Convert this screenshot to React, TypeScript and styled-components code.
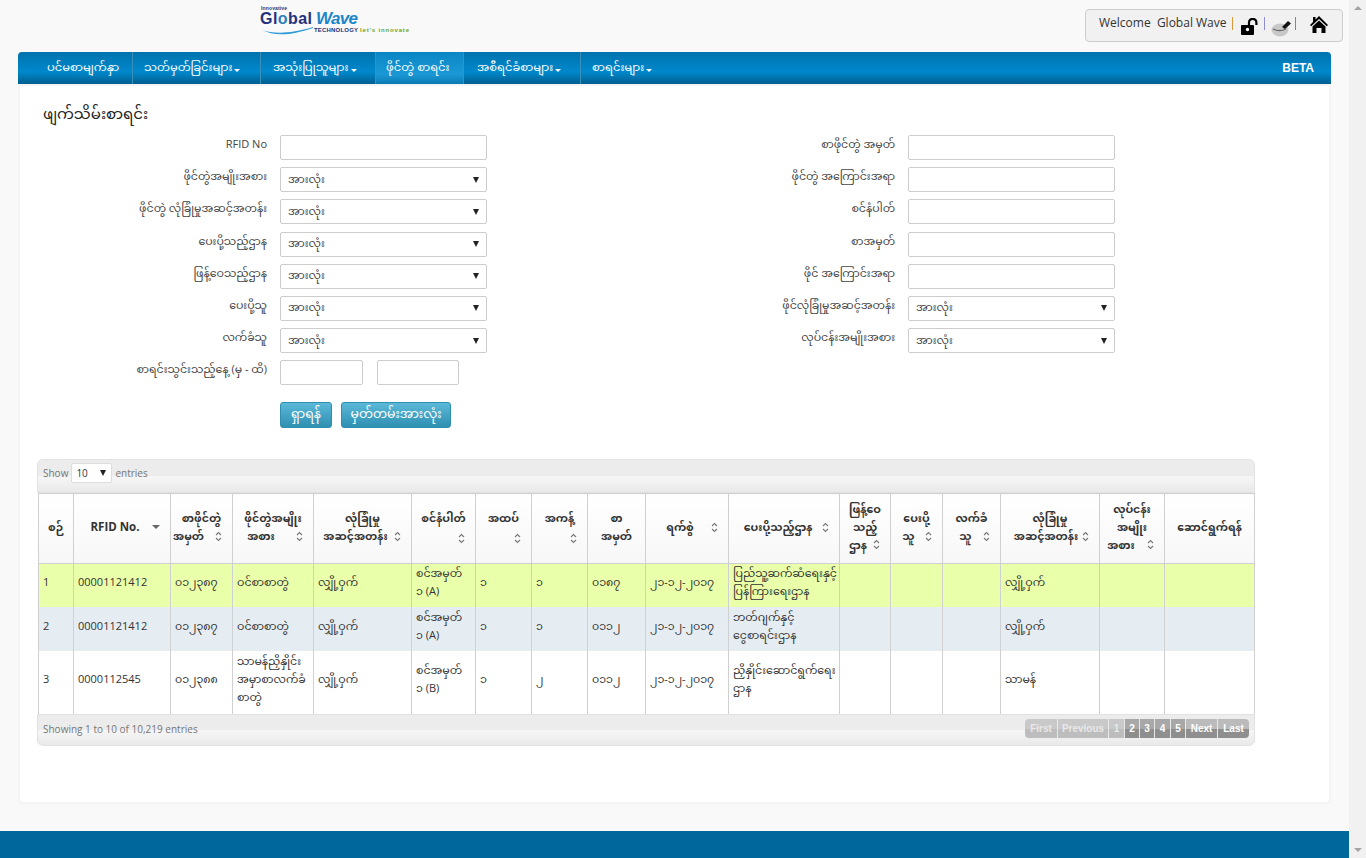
import styled, { createGlobalStyle } from "styled-components";

const GlobalStyle = createGlobalStyle`
  body {
    margin: 0;
    padding-right: 17px;
    background: #f9f9f9;
    font-family: "Open Sans", "Noto Sans Myanmar", "Padauk", "Myanmar Text", "Noto Sans", sans-serif;
    font-size: 12px;
    color: #333;
  }
  * { box-sizing: border-box; }
`;

const navItems = [
  { label: "ပင်မစာမျက်နှာ", width: 115, pad: 29 },
  { label: "သတ်မှတ်ခြင်းများ", width: 128, pad: 11, caret: true },
  { label: "အသုံးပြုသူများ", width: 115, pad: 12, caret: true },
  { label: "ဖိုင်တွဲ စာရင်း", width: 88, pad: 10, active: true },
  { label: "အစီရင်ခံစာများ", width: 117, pad: 13, caret: true },
  { label: "စာရင်းများ", width: 85, pad: 11, caret: true },
];

const leftFields = [
  { label: "RFID No" },
  { label: "ဖိုင်တွဲအမျိုးအစား", select: true },
  { label: "ဖိုင်တွဲ လုံခြုံမှုအဆင့်အတန်း", select: true },
  { label: "ပေးပို့သည့်ဌာန", select: true },
  { label: "ဖြန့်ဝေသည့်ဌာန", select: true },
  { label: "ပေးပို့သူ", select: true },
  { label: "လက်ခံသူ", select: true },
];

const rightFields = [
  { label: "စာဖိုင်တွဲ အမှတ်" },
  { label: "ဖိုင်တွဲ အကြောင်းအရာ" },
  { label: "စင်နံပါတ်" },
  { label: "စာအမှတ်" },
  { label: "ဖိုင် အကြောင်းအရာ" },
  { label: "ဖိုင်လုံခြုံမှုအဆင့်အတန်း", select: true },
  { label: "လုပ်ငန်းအမျိုးအစား", select: true },
];

// top = where the sort icon sits, shift = how far the last line is pushed left
const columns = [
  { lines: ["စဉ်"], width: 35 },
  { lines: ["RFID No."], width: 97, caret: 29, big: true, shift: 7 },
  { lines: ["စာဖိုင်တွဲ", "အမှတ်"], width: 62, top: 42, shift: 13 },
  { lines: ["ဖိုင်တွဲအမျိုး", "အစား"], width: 81, top: 42, shift: 12 },
  { lines: ["လုံခြုံမှု", "အဆင့်အတန်း"], width: 98, top: 42, shift: 7 },
  { lines: ["စင်နံပါတ်", "\u00a0"], width: 64, top: 44 },
  { lines: ["အထပ်", "\u00a0"], width: 56, top: 44 },
  { lines: ["အကန့်", "\u00a0"], width: 56, top: 44 },
  { lines: ["စာ", "အမှတ်"], width: 58 },
  { lines: ["ရက်စွဲ"], width: 83, top: 33, shift: 7 },
  { lines: ["ပေးပို့သည့်ဌာန"], width: 111, top: 33, shift: 6 },
  { lines: ["ဖြန့်ဝေ", "သည့်", "ဌာန"], width: 51, top: 50, shift: 7 },
  { lines: ["ပေးပို့", "သူ"], width: 52, top: 42, shift: 8 },
  { lines: ["လက်ခံ", "သူ"], width: 58, top: 42, shift: 6 },
  { lines: ["လုံခြုံမှု", "အဆင့်အတန်း"], width: 99, top: 42, shift: 4 },
  { lines: ["လုပ်ငန်း", "အမျိုး", "အစား"], width: 65, top: 50, shift: 11 },
  { lines: ["ဆောင်ရွက်ရန်"], width: 90 },
];

const rows = [
  ["1", "00001121412", "၀၁၂၃၈၇", "ဝင်စာစာတွဲ", "လျှို့ဝှက်", "စင်အမှတ်\n၁ (A)", "၁", "၁", "၀၁၈၇", "၂၁-၁၂-၂၀၁၇", "ပြည်သူ့ဆက်ဆံရေးနှင့်ပြန်ကြားရေးဌာန", "", "", "", "လျှို့ဝှက်", "", ""],
  ["2", "00001121412", "၀၁၂၃၈၇", "ဝင်စာစာတွဲ", "လျှို့ဝှက်", "စင်အမှတ်\n၁ (A)", "၁", "၁", "၀၁၁၂", "၂၁-၁၂-၂၀၁၇", "ဘတ်ဂျက်နှင့် ငွေစာရင်းဌာန", "", "", "", "လျှို့ဝှက်", "", ""],
  ["3", "0000112545", "၀၁၂၃၈၈", "သာမန်ညှိနှိုင်း အမှာစာလက်ခံ စာတွဲ", "လျှို့ဝှက်", "စင်အမှတ်\n၁ (B)", "၁", "၂", "၀၁၁၂", "၂၁-၁၂-၂၀၁၇", "ညှိနှိုင်းဆောင်ရွက်ရေး ဌာန", "", "", "", "သာမန်", "", ""],
];

const pages = [
  { label: "First", off: true, width: 33 },
  { label: "Previous", off: true, width: 51 },
  { label: "1", off: true, width: 16 },
  { label: "2", width: 15 },
  { label: "3", width: 15 },
  { label: "4", width: 16 },
  { label: "5", width: 15 },
  { label: "Next", width: 32, light: true },
  { label: "Last", width: 31, light: true },
];

const Scrollbar = styled.aside`
  position: fixed;
  top: 0;
  right: 0;
  bottom: 0;
  width: 17px;
  display: flex;
  flex-direction: column;
  justify-content: space-between;
  align-items: center;
  padding: 6px 0;
  background: #f1f1f1;
`;
const ScrollArrow = styled.i<{ $down?: boolean }>`
  border-left: 4px solid transparent;
  border-right: 4px solid transparent;
  ${(p) => (p.$down ? "border-top: 4px solid #a3a3a3;" : "border-bottom: 4px solid #a3a3a3;")}
`;
const Header = styled.header`
  height: 52px;
  display: flex;
  justify-content: space-between;
  align-items: flex-start;
  padding: 5px 6px 0 260px;
`;
const Logo = styled.svg`
  display: block;
`;
const WelcomeBox = styled.div`
  width: 258px;
  height: 33px;
  margin-top: 4px;
  padding: 0 0 0 13px;
  display: flex;
  background: #f1f1f1;
  border: 1px solid #ccc;
  border-radius: 4px;
  font-size: 12px;
  color: #333;
`;
const WelcomeText = styled.span`
  line-height: 25px;
  white-space: pre;
`;
const Pipe = styled.i<{ $color: string; $left: number }>`
  width: 1px;
  height: 13px;
  margin: 7px 0 0 ${(p) => p.$left}px;
  background: ${(p) => p.$color};
`;
const IconSlot = styled.span<{ $left: number; $top: number }>`
  margin: ${(p) => p.$top}px 0 0 ${(p) => p.$left}px;
  line-height: 0;
`;
const Nav = styled.nav`
  margin: 0 18px;
  height: 32px;
  display: flex;
  justify-content: space-between;
  border-radius: 4px 4px 0 0;
  background: linear-gradient(#0073ae 0%, #0088cc 62%, #005f8f 100%);
`;
const NavList = styled.div`
  display: flex;
`;
const NavItem = styled.div<{ $width: number; $pad: number; $active?: boolean }>`
  width: ${(p) => p.$width}px;
  padding-left: ${(p) => p.$pad}px;
  display: flex;
  align-items: center;
  gap: 2px;
  color: #fff;
  font-size: 11.5px;
  white-space: nowrap;
  border-right: 1px solid #3c8fb8;
  background: ${(p) => (p.$active ? "linear-gradient(#0a86c4, #1b98d6 70%, #0a7ab2)" : "none")};
  &:last-child { border-right: 0; }
`;
const Caret = styled.i`
  margin-top: 4px;
  border-left: 3px solid transparent;
  border-right: 3px solid transparent;
  border-top: 3px solid #fff;
`;
const Beta = styled.b`
  align-self: center;
  margin-right: 17px;
  color: #fff;
  font-family: "Liberation Sans", sans-serif;
  font-size: 12px;
`;
const Panel = styled.main`
  margin: 0 18px;
  height: 720px;
  padding: 16px 17px 0;
  background: #fff;
  border: 2px solid #f4f4f4;
  border-radius: 0 0 4px 4px;
`;
const Title = styled.h1`
  margin: 0 0 11px 6px;
  height: 22px;
  font-size: 15px;
  font-weight: 400;
  line-height: 22px;
  color: #222;
`;
const FormGrid = styled.div`
  display: grid;
  grid-template-columns: 628px 1fr;
`;
const FormColumn = styled.div`
  display: flex;
  flex-direction: column;
  gap: 7.2px;
`;
const FormRow = styled.label`
  display: flex;
  align-items: flex-start;
  gap: 13px;
  height: 25px;
`;
const FieldLabel = styled.span`
  width: 230px;
  flex: none;
  text-align: right;
  font-size: 11px;
  line-height: 18px;
  white-space: nowrap;
  color: #444;
`;
const TextBox = styled.div<{ $width?: number }>`
  width: ${(p) => p.$width ?? 207}px;
  height: 25px;
  background: #fff;
  border: 1px solid #ccc;
  border-radius: 2px;
`;
const SelectBox = styled(TextBox)`
  display: flex;
  align-items: center;
  justify-content: space-between;
  padding: 0 7px;
  font-size: 11px;
  color: #444;
`;
const SelectArrow = styled.i`
  border-left: 3px solid transparent;
  border-right: 3px solid transparent;
  border-top: 6px solid #222;
`;
const DateGap = styled.div`
  display: flex;
  gap: 14px;
`;
const Buttons = styled.div`
  display: flex;
  gap: 9px;
  margin: 17px 0 31px 243px;
`;
const Button = styled.div<{ $width: number }>`
  width: ${(p) => p.$width}px;
  height: 26px;
  display: flex;
  align-items: center;
  justify-content: center;
  color: #fff;
  font-size: 12.5px;
  border-radius: 3px;
  border: 1px solid #2f8fae;
  background: linear-gradient(#5bb8d8, #2f90b2);
`;
const TableWrap = styled.section`
  width: 1218px;
`;
const Bar = styled.div<{ $bottom?: boolean }>`
  height: ${(p) => (p.$bottom ? 32 : 34)}px;
  display: flex;
  align-items: center;
  justify-content: space-between;
  padding: ${(p) => (p.$bottom ? "0 5px 3px 5px" : "0 5px 7px")};
  color: #777;
  font-size: 10px;
  border: 1px solid #e2e2e2;
  border-radius: ${(p) => (p.$bottom ? "0 0 6px 6px" : "6px 6px 0 0")};
  background: linear-gradient(#ececec 50%, #f6f6f6 51%, #e9e9e9);
`;
const ShowEntries = styled.div`
  display: flex;
  align-items: center;
  gap: 3px;
`;
const SmallSelect = styled.div`
  width: 41px;
  height: 20px;
  display: flex;
  align-items: center;
  justify-content: space-between;
  padding: 0 5px 0 4px;
  color: #333;
  background: #fff;
  border: 1px solid #ddd;
  border-radius: 2px;
`;
const Table = styled.table`
  width: 1216px;
  margin-left: 1px;
  table-layout: fixed;
  border-collapse: collapse;
  font-size: 11px;
`;
const Col = styled.col<{ $width: number }>`
  width: ${(p) => p.$width}px;
`;
const HeadCell = styled.th<{ $big?: boolean }>`
  position: relative;
  height: 70px;
  padding: 0 0 4px;
  text-align: center;
  vertical-align: middle;
  font-size: ${(p) => (p.$big ? 11.5 : 11)}px;
  line-height: 18px;
  color: #333;
  border: 1px solid #d0d0d0;
  background: linear-gradient(#ffffff, #f7f7f7);
`;
const HeadLine = styled.span<{ $shift: number }>`
  display: block;
  padding-right: ${(p) => p.$shift * 2}px;
  white-space: nowrap;
`;
const BodyRow = styled.tr<{ $bg: string; $height: number }>`
  height: ${(p) => p.$height}px;
  background: ${(p) => p.$bg};
`;
const BodyCell = styled.td`
  padding: 0 2px 7px 4px;
  line-height: 18px;
  white-space: pre-line;
  color: #333;
  border: solid #d0d0d0;
  border-width: 0 1px;
`;
const SortMark = styled.svg<{ $top: number }>`
  position: absolute;
  top: ${(p) => p.$top - 5}px;
  right: 10px;
`;
const CaretDown = styled.i<{ $top: number }>`
  position: absolute;
  top: ${(p) => p.$top}px;
  right: 10px;
  border-left: 4px solid transparent;
  border-right: 4px solid transparent;
  border-top: 4px solid #666;
`;
const Pager = styled.div`
  display: flex;
  border-radius: 4px;
  overflow: hidden;
`;
const PageButton = styled.span<{ $width: number; $off?: boolean; $light?: boolean }>`
  width: ${(p) => p.$width}px;
  height: 19px;
  display: flex;
  align-items: center;
  justify-content: center;
  font-family: "Liberation Sans", sans-serif;
  font-size: 10px;
  font-weight: 700;
  color: ${(p) => (p.$off ? "#e8e8e8" : "#fff")};
  border-right: 1px solid #e8e8e8;
  background: ${(p) =>
    p.$off
      ? "linear-gradient(#c9c9c9 50%, #bdbdbd 51%)"
      : p.$light
        ? "linear-gradient(#bbb 50%, #8f8f8f 51%)"
        : "linear-gradient(#a8a8a8 50%, #8e8e8e 51%)"};
  &:last-child { border-right: 0; }
`;
const Footer = styled.footer`
  margin-top: 27px;
  height: 27px;
  background: #00679c;
`;

function Sort({ top }: { top: number }) {
  return (
    <SortMark $top={top} width="7" height="11" viewBox="0 0 7 11" fill="none" stroke="#777" strokeWidth="1.1">
      <path d="M1 4 3.5 1.5 6 4M1 7l2.5 2.5L6 7" />
    </SortMark>
  );
}

function Field({ label, select }: { label: string; select?: boolean }) {
  return (
    <FormRow>
      <FieldLabel>{label}</FieldLabel>
      {select ? (
        <SelectBox>
          အားလုံး
          <SelectArrow />
        </SelectBox>
      ) : (
        <TextBox />
      )}
    </FormRow>
  );
}

export default function App() {
  return (
    <>
      <GlobalStyle />
      <Scrollbar>
        <ScrollArrow />
        <ScrollArrow $down />
      </Scrollbar>
      <Header>
        <Logo width="152" height="32" viewBox="0 0 152 32" fontFamily="Liberation Sans">
          <text x="1" y="5" fontSize="5" fontWeight="700" fill="#223a7a" textLength="26">Innovative</text>
          <text x="0" y="19" fontSize="16" fontWeight="700" fill="#24307e" textLength="52">
            Gl<tspan fill="#2f7fc0">o</tspan>bal
          </text>
          <text x="56" y="19" fontSize="17" fontWeight="700" fontStyle="italic" fill="#1e86c8" textLength="42">Wave</text>
          <path d="M2 25C14 29 30 29 53 22L53 23C30 31 14 31 2 25Z" fill="#2f9bd8" />
          <text x="54" y="27" fontSize="6" fontWeight="700" fill="#24307e" textLength="44">TECHNOLOGY</text>
          <text x="100" y="27" fontSize="6" fontWeight="700" fill="#6aa51e" textLength="49">let's  innovate</text>
        </Logo>
        <WelcomeBox>
          <WelcomeText>Welcome  Global Wave </WelcomeText>
          <Pipe $color="#d59a3c" $left={2} />
          <IconSlot $left={8} $top={8}>
            <svg width="17" height="17" viewBox="0 0 17 17">
              <rect x="0" y="7" width="13" height="10" rx="1" fill="#000" />
              <circle cx="6.5" cy="11.5" r="1.7" fill="#fff" />
              <path d="M8 7V4.5a3.6 3.6 0 0 1 7.4 0V7" fill="none" stroke="#000" strokeWidth="2.2" />
            </svg>
          </IconSlot>
          <Pipe $color="#8f8fd0" $left={6} />
          <IconSlot $left={6} $top={10}>
            <svg width="20" height="17" viewBox="0 0 20 17">
              <ellipse cx="9" cy="10" rx="8.5" ry="6.5" fill="#c8c8c8" />
              <path d="M2 9c4 2 9 2 13 0" stroke="#666" strokeWidth="1.2" fill="none" />
              <path d="M11 7l6-6 3 2.5-6 5.5z" fill="#111" />
            </svg>
          </IconSlot>
          <Pipe $color="#2aa5dc" $left={4} />
          <IconSlot $left={14} $top={6}>
            <svg width="18" height="17" viewBox="0 0 18 17">
              <path d="M9 0 18 9l-1.2 1.2L9 3 1.2 10.2 0 9l3-3V1h2.5v2.6z" fill="#000" />
              <path d="M9 4.4 15.5 10.4V17h-4v-5h-5v5h-4v-6.6z" fill="#000" />
            </svg>
          </IconSlot>
        </WelcomeBox>
      </Header>
      <Nav>
        <NavList>
          {navItems.map((item) => (
            <NavItem key={item.label} $width={item.width} $pad={item.pad} $active={item.active}>
              {item.label}
              {item.caret && <Caret />}
            </NavItem>
          ))}
        </NavList>
        <Beta>BETA</Beta>
      </Nav>
      <Panel>
        <Title>ဖျက်သိမ်းစာရင်း</Title>
        <FormGrid>
          <FormColumn>
            {leftFields.map((f) => (
              <Field key={f.label} label={f.label} select={f.select} />
            ))}
            <FormRow>
              <FieldLabel>စာရင်းသွင်းသည့်နေ့ (မှ - ထိ)</FieldLabel>
              <DateGap>
                <TextBox $width={83} />
                <TextBox $width={82} />
              </DateGap>
            </FormRow>
          </FormColumn>
          <FormColumn>
            {rightFields.map((f) => (
              <Field key={f.label} label={f.label} select={f.select} />
            ))}
          </FormColumn>
        </FormGrid>
        <Buttons>
          <Button $width={52}>ရှာရန်</Button>
          <Button $width={110}>မှတ်တမ်းအားလုံး</Button>
        </Buttons>
        <TableWrap>
          <Bar>
            <ShowEntries>
              Show
              <SmallSelect>10<SelectArrow /></SmallSelect>
              entries
            </ShowEntries>
          </Bar>
          <Table>
            <colgroup>
              {columns.map((c, i) => (
                <Col key={i} $width={c.width} />
              ))}
            </colgroup>
            <thead>
              <tr>
                {columns.map((c, i) => (
                  <HeadCell key={i} $big={c.big}>
                    {c.lines.map((line, n) => (
                      <HeadLine key={n} $shift={n === c.lines.length - 1 ? c.shift ?? 0 : 0}>{line}</HeadLine>
                    ))}
                    {c.top && <Sort top={c.top} />}
                    {c.caret && <CaretDown $top={c.caret + 2} />}
                  </HeadCell>
                ))}
              </tr>
            </thead>
            <tbody>
              {rows.map((row, r) => (
                <BodyRow key={r} $bg={["#eaffaa", "#e5edf3", "#fff"][r]} $height={[43, 44, 63][r]}>
                  {row.map((cell, i) => (
                    <BodyCell key={i}>{cell}</BodyCell>
                  ))}
                </BodyRow>
              ))}
            </tbody>
          </Table>
          <Bar $bottom>
            <span>Showing 1 to 10 of 10,219 entries</span>
            <Pager>
              {pages.map((p) => (
                <PageButton key={p.label} $width={p.width} $off={p.off} $light={p.light}>{p.label}</PageButton>
              ))}
            </Pager>
          </Bar>
        </TableWrap>
      </Panel>
      <Footer />
    </>
  );
}
